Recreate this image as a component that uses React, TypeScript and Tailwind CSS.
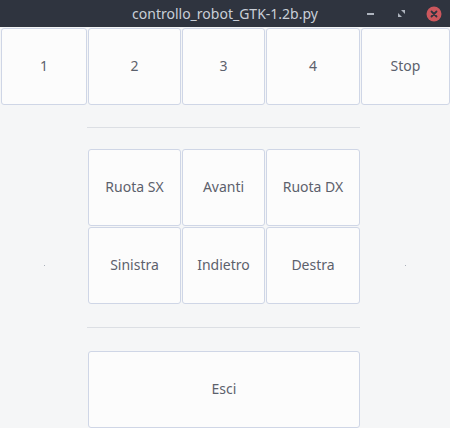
import React from "react";

const font = { fontFamily: '"Noto Sans", "DejaVu Sans", sans-serif' };

function Btn({ label, className = "" }: { label: string; className?: string }) {
  return (
    <button
      className={`flex items-center justify-center rounded-[3px] border border-[#cfd6e6] bg-[#fcfcfc] pb-[2px] text-[14px] text-[#5c616c] ${className}`}
      style={font}
    >
      {label}
    </button>
  );
}

function Sep() {
  return (
    <div className="col-start-2 col-span-3 flex items-center">
      <div className="h-px w-[273px] -ml-px bg-[#dcdfe4]" />
    </div>
  );
}

function Dot({ className = "" }: { className?: string }) {
  return (
    <div className={`flex items-center justify-center ${className}`}>
      <div className="h-px w-px bg-[#aab0ba]" />
    </div>
  );
}

export default function App() {
  return (
    <div className="h-[428px] w-[450px] overflow-hidden bg-[#f5f6f7]" style={font}>
      <div className="relative flex h-[27px] items-center justify-center bg-[#2f343f]">
        <span className="text-[14px] text-[#c9cfd8]">controllo_robot_GTK-1.2b.py</span>
        <div className="absolute left-[367px] top-[13px] h-[2px] w-[7px] bg-[#aeb4be]" />
        <svg className="absolute left-[397px] top-[9px]" width="9" height="9" viewBox="0 0 9 9">
          <polygon points="4,1 8,1 8,5" fill="#aeb4be" />
          <polygon points="1,4 1,8 5,8" fill="#aeb4be" />
        </svg>
        <svg className="absolute left-[426px] top-[6px]" width="16" height="16" viewBox="0 0 16 16">
          <circle cx="8" cy="8" r="7.5" fill="#cc575d" />
          <path d="M5.5 5.5 L10.5 10.5 M10.5 5.5 L5.5 10.5" stroke="#2f343f" strokeWidth="1.8" strokeLinecap="round" />
        </svg>
      </div>
      <div className="grid grid-cols-[86px_93px_83px_94px_89px] grid-rows-[77px_42px_77px_77px_45px_77px] gap-px pl-px pt-px">
        <Btn label="1" />
        <Btn label="2" />
        <Btn label="3" />
        <Btn label="4" />
        <Btn label="Stop" />
        <Sep />
        <Btn label="Ruota SX" className="col-start-2" />
        <Btn label="Avanti" />
        <Btn label="Ruota DX" />
        <Dot className="col-start-1" />
        <Btn label="Sinistra" />
        <Btn label="Indietro" />
        <Btn label="Destra" />
        <Dot />
        <Sep />
        <Btn label="Esci" className="col-start-2 col-span-3" />
      </div>
    </div>
  );
}
